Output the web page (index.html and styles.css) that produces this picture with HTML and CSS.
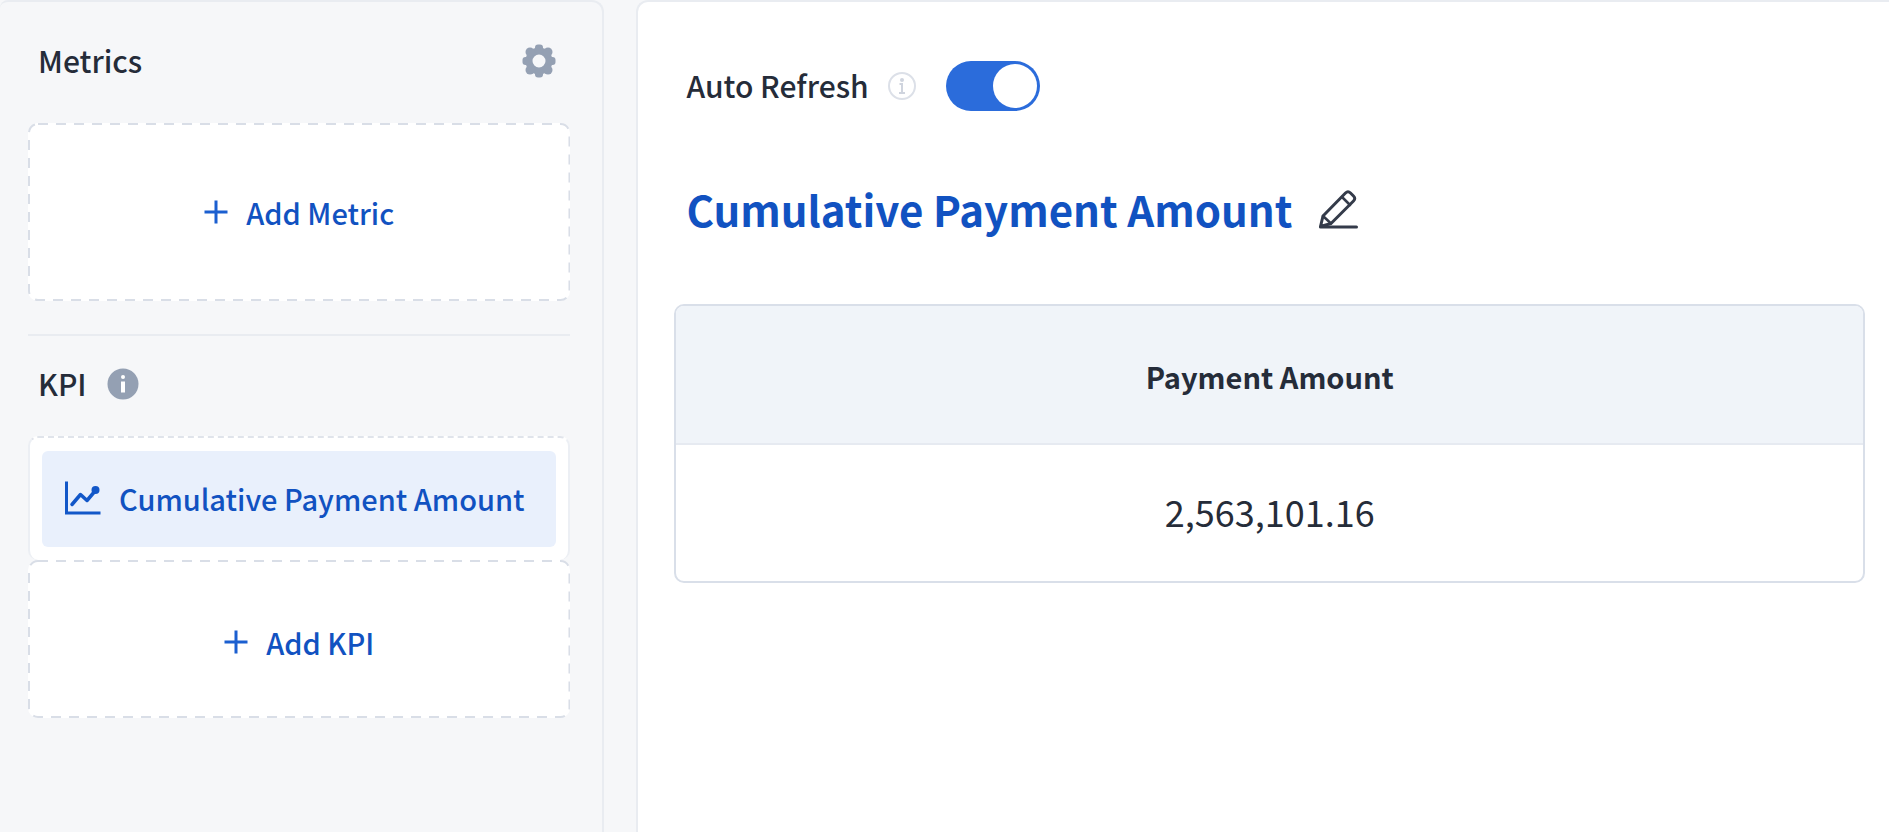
FILE: index.html
```
<!DOCTYPE html>
<html lang="en">
<head>
    <meta charset="UTF-8">
    <title>Cumulative Payment Amount</title>
    <link rel="stylesheet" href="styles.css">
</head>
<body>
    <div class="page">
        <aside class="sidebar">
            <div class="side-head">
                <h2 class="side-title">Metrics</h2>
                <button class="icon-btn" type="button" aria-label="Settings">
                    <svg width="34" height="34" viewBox="0 0 34 34" fill="#94a0b3">
                        <circle cx="17" cy="17" r="10" fill="none" stroke="#94a0b3" stroke-width="7"/>
                        <rect x="13" y="0.500" width="8" height="9" rx="3"/>
                        <rect x="13" y="24.500" width="8" height="9" rx="3"/>
                        <rect x="0.500" y="13" width="9" height="8" rx="3"/>
                        <rect x="24.500" y="13" width="9" height="8" rx="3"/>
                        <circle cx="8" cy="8" r="4.500"/>
                        <circle cx="26" cy="8" r="4.500"/>
                        <circle cx="8" cy="26" r="4.500"/>
                        <circle cx="26" cy="26" r="4.500"/>
                    </svg>
                </button>
            </div>
            <button class="add-box add-metric" type="button">
                <svg class="dashes"><rect x="1" y="1" rx="9"/></svg>
                <svg width="24" height="24" viewBox="0 0 24 24" stroke="#1b5fd0" stroke-width="3"><path d="M12 0.5v23M0.5 12h23"/></svg>
                Add Metric
            </button>
            <div class="side-head kpi-head">
                <h2 class="side-title">KPI</h2>
                <svg width="32" height="32" viewBox="0 0 32 32">
                    <circle cx="16" cy="16" r="15.500" fill="#94a0b3"/>
                    <circle cx="16" cy="9" r="2" fill="#fff"/>
                    <path d="M16 13.5v11" stroke="#fff" stroke-width="4"/>
                </svg>
            </div>
            <div class="kpi-list">
                <button class="kpi-item" type="button">
                    <svg width="37" height="34" viewBox="0 0 37 34" fill="none" stroke="#1257c8" stroke-width="3">
                        <path d="M2.5 0.5v31.5H36.5"/>
                        <path d="M8 23.5l8.500-10 6.500 6 8.500-10" stroke-width="3.500" stroke-linejoin="round" stroke-linecap="round"/>
                        <circle cx="31.500" cy="9" r="4" fill="#1257c8" stroke="none"/>
                    </svg>
                    Cumulative Payment Amount
                </button>
            </div>
            <button class="add-box add-kpi" type="button">
                <svg class="dashes"><rect x="1" y="1" rx="9"/></svg>
                <svg width="24" height="24" viewBox="0 0 24 24" stroke="#1b5fd0" stroke-width="3"><path d="M12 0.5v23M0.5 12h23"/></svg>
                Add KPI
            </button>
        </aside>
        <main class="content">
            <div class="refresh">
                <label for="refresh">Auto Refresh</label>
                <svg width="30" height="30" viewBox="0 0 30 30">
                    <circle cx="15" cy="15" r="13" fill="none" stroke="#dce0e8" stroke-width="2"/>
                    <circle cx="15" cy="9" r="2" fill="#cfd4de"/>
                    <path d="M12.500 13H15v9M12 22h6" fill="none" stroke="#cfd4de" stroke-width="2"/>
                </svg>
                <input class="switch" type="checkbox" id="refresh" checked>
            </div>
            <div class="title-row">
                <h1 class="title">Cumulative Payment Amount</h1>
                <button class="icon-btn" type="button" aria-label="Edit title">
                    <svg width="40" height="40" viewBox="0 0 40 40" fill="none" stroke="#343b4a" stroke-width="3" stroke-linejoin="round" stroke-linecap="round">
                        <path d="M2.500 37.500L5 27 27.500 4Q30 1.500 32.500 4L35.500 7Q38 9.500 35.500 12L13 34.500z"/>
                        <path d="M24 8l8 8M5 27l8 7.500" stroke-width="2.500"/>
                        <path d="M2.500 38H38.500"/>
                    </svg>
                </button>
            </div>
            <table class="data">
                <thead>
                    <tr><th>Payment Amount</th></tr>
                </thead>
                <tbody>
                    <tr><td>2,563,101.16</td></tr>
                </tbody>
            </table>
        </main>
    </div>
</body>
</html>
```
FILE: styles.css
```
*{
    box-sizing: border-box;
    padding:0;
    margin:0;
}
body{
    font-family: "Noto Sans CJK SC", "Noto Sans", sans-serif;
    font-size:30px;
    font-weight: 500;
    line-height:44px;
    color:#252c39;
    background: #f6f7f9;
}
button{
    font: inherit;
    font-size:29px;
    color:#1152c1;
    background: none;
    border:none;
    cursor: pointer;
}
svg{
    display: block;
    flex-shrink: 0;
}
.page{
    display: grid;
    grid-template-columns: 32% 1fr;
    column-gap:32px;
    min-height:100vh;
}
.sidebar{
    display: flex;
    flex-direction: column;
    padding:0 32px 32px 28px;
    border:2px solid #e9ecf1;
    border-left:none;
    border-bottom:none;
    border-radius: 8px 12px 0 0;
}
.side-head{
    display: flex;
    align-items: center;
    justify-content: space-between;
    height:121px;
    padding:0 14px 4px 10px;
}
.side-title{
    padding-bottom:2px;
    font-size:30px;
    font-weight: 500;
}
.kpi-head{
    justify-content: flex-start;
    gap:20px;
    height:102px;
    margin-top:33px;
    border-top:2px solid #e9ecf1;
}
.add-box{
    position: relative;
    display: flex;
    align-items: center;
    justify-content: center;
    gap:18px;
    background: #fff;
    border-radius: 10px;
}
/*虚线边框*/
.dashes{
    position: absolute;
    top:0;
    left:0;
    width:100%;
    height:100%;
}
.dashes rect{
    width:calc(100% - 2px);
    height:calc(100% - 2px);
    fill:none;
    stroke:#d9dee7;
    stroke-width:2px;
    stroke-dasharray:10px 8px;
}
.add-metric{
    height:178px;
}
.add-kpi{
    height:158px;
    padding-top:6px;
}
.kpi-list{
    padding:13px 12px;
    background: #fff;
    border:2px solid #eceff4;
    border-top:2px dashed #e0e4eb;
    border-bottom:none;
    border-radius: 10px;
}
.kpi-item{
    display: flex;
    align-items: center;
    gap:18px;
    width:100%;
    height:96px;
    padding:0 22px 2px;
    white-space: nowrap;
    background: #e9f0fc;
    border-radius: 6px;
}
.content{
    padding:50px 24px 50px 36px;
    background: #fff;
    border:2px solid #e9ecf1;
    border-right:none;
    border-bottom:none;
    border-radius: 12px 0 0 0;
}
.refresh{
    display: flex;
    align-items: center;
    height:68px;
    padding-left:12px;
}
.refresh label{
    padding-bottom:2px;
}
.refresh svg{
    margin:0 29px 0 18px;
}
.switch{
    display: flex;
    appearance: none;
    width:94px;
    height:50px;
    padding:3px;
    justify-content: flex-end;
    background: #2b6cdb;
    border-radius: 25px;
    cursor: pointer;
}
.switch:not(:checked){
    justify-content: flex-start;
    background: #c3cad6;
}
.switch::before{
    content: "";
    width:44px;
    height:44px;
    background: #fff;
    border-radius: 50%;
}
.title-row{
    display: flex;
    align-items: center;
    gap:26px;
    height:64px;
    margin:57px 0 63px;
    padding-left:12px;
}
.title{
    font-size:42px;
    font-weight: 700;
    line-height:64px;
    color:#1152c1;
}
.data{
    width:100%;
    overflow: hidden;
    border:2px solid #d9dfe9;
    border-radius: 10px;
    border-spacing: 0;
    text-align: center;
}
.data th{
    height:139px;
    padding-top:2px;
    font-size:29px;
    font-weight: 700;
    background: #f0f4f9;
    border-bottom:2px solid #e6eaf1;
}
.data td{
    height:136px;
    padding-bottom:4px;
    font-size:36px;
    font-weight: 400;
}
```
